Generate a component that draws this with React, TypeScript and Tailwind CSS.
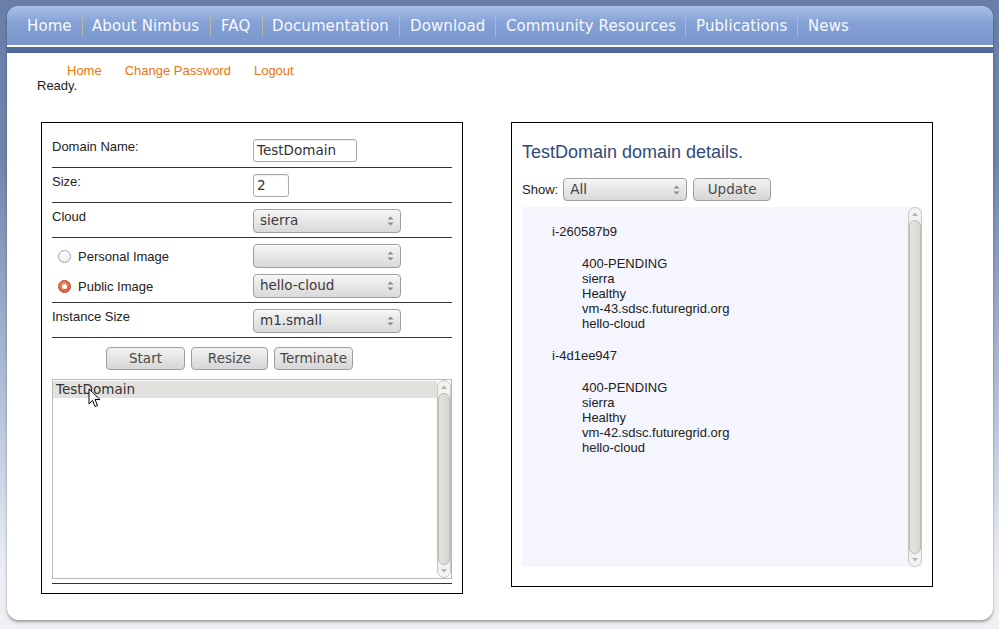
import React from "react";

const DV = "font-['DejaVu_Sans',sans-serif]";
const LIB = "font-['Liberation_Sans',Arial,sans-serif]";

function Arrows() {
  return (
    <svg width="7" height="12" viewBox="0 0 7 12" className="shrink-0">
      <path d="M0.5 4.5 L3.5 1.5 L6.5 4.5 Z" fill="#8a8a8a" />
      <path d="M0.5 7.5 L3.5 10.5 L6.5 7.5 Z" fill="#8a8a8a" />
    </svg>
  );
}

function Select({ value, w = "w-[148px]", h = "h-[24px]" }: { value: string; w?: string; h?: string }) {
  return (
    <div
      className={`${w} ${h} ${DV} flex items-center justify-between rounded-[4px] border border-[#9e9e9e] bg-[linear-gradient(to_bottom,#f5f5f5,#d9d9d9)] pl-[6px] pr-[6px] text-[13.5px] leading-none text-[#3a3a3a] shadow-[inset_0_1px_0_rgba(255,255,255,0.8)]`}
    >
      <span>{value}</span>
      <Arrows />
    </div>
  );
}

function Button({ label, w }: { label: string; w: string }) {
  return (
    <div
      className={`${w} ${DV} flex h-[23px] items-center justify-center rounded-[4px] border border-[#9e9e9e] bg-[linear-gradient(to_bottom,#f2f2f2,#d6d6d6)] text-[13.5px] leading-none text-[#4a4a4a]`}
    >
      {label}
    </div>
  );
}

function TextInput({ value, w }: { value: string; w: string }) {
  return (
    <div
      className={`${w} ${DV} flex h-[23px] items-center rounded-[3px] border border-[#a9a9a9] bg-white pl-[3px] text-[13.5px] leading-none text-[#333] shadow-[inset_0_1px_1px_rgba(0,0,0,0.08)]`}
    >
      {value}
    </div>
  );
}

function Scrollbar() {
  return (
    <div className="flex h-full w-[14px] shrink-0 flex-col items-center rounded-[7px] border border-[#c9c6bf] bg-[#f3f2f0]">
      <div className="flex h-[12px] w-full items-center justify-center">
        <svg width="6" height="4" viewBox="0 0 6 4">
          <path d="M0 4 L3 0.5 L6 4 Z" fill="#b5b2ab" />
        </svg>
      </div>
      <div className="w-[12px] flex-1 rounded-full border border-[#bdbab3] bg-[linear-gradient(to_right,#e6e4e1,#d9d7d3)]" />
      <div className="flex h-[12px] w-full items-center justify-center">
        <svg width="6" height="4" viewBox="0 0 6 4">
          <path d="M0 0 L3 3.5 L6 0 Z" fill="#b5b2ab" />
        </svg>
      </div>
    </div>
  );
}

function Radio({ checked }: { checked?: boolean }) {
  if (checked) {
    return (
      <div className="flex h-[13px] w-[13px] items-center justify-center rounded-full border border-[#b4472a] bg-[radial-gradient(circle_at_40%_35%,#f28a65,#e0522c)]">
        <div className="h-[5px] w-[5px] rounded-full bg-white" />
      </div>
    );
  }
  return (
    <div className="h-[13px] w-[13px] rounded-full border border-[#a0a0a0] bg-[linear-gradient(to_bottom,#ffffff,#ececec)]" />
  );
}

const navItems: { label: string; w: string; pl: string }[] = [
  { label: "Home", w: "w-[65px]", pl: "pl-[10px]" },
  { label: "About Nimbus", w: "w-[127px]", pl: "pl-[9px]" },
  { label: "FAQ", w: "w-[51px]", pl: "pl-[10px]" },
  { label: "Documentation", w: "w-[136px]", pl: "pl-[9px]" },
  { label: "Download", w: "w-[95px]", pl: "pl-[10px]" },
  { label: "Community Resources", w: "w-[189px]", pl: "pl-[10px]" },
  { label: "Publications", w: "w-[111px]", pl: "pl-[10px]" },
  { label: "News", w: "w-[60px]", pl: "pl-[10px]" },
];

const instances = [
  {
    id: "i-260587b9",
    lines: ["400-PENDING", "sierra", "Healthy", "vm-43.sdsc.futuregrid.org", "hello-cloud"],
  },
  {
    id: "i-4d1ee947",
    lines: ["400-PENDING", "sierra", "Healthy", "vm-42.sdsc.futuregrid.org", "hello-cloud"],
  },
];

export default function App() {
  return (
    <div
      className={`h-[629px] w-[999px] overflow-hidden bg-[linear-gradient(to_bottom,#6a7fa8_0px,#7084ad_160px,#b9c6de_420px,#e9edf3_560px,#eef0f4_629px)] pl-[7px] pt-[6px] ${LIB}`}
    >
      <div className="flex h-[614px] w-[986px] flex-col overflow-hidden rounded-[12px] bg-white shadow-[0_2px_3px_rgba(0,0,0,0.35)]">
        {/* Nav */}
        <div className="flex h-[39px] items-center bg-[linear-gradient(to_bottom,#a9c0eb_0%,#86a2d5_40%,#7997cc_100%)] pl-[10px]">
          {navItems.map((item, i) => (
            <React.Fragment key={item.label}>
              {i > 0 && <div className="h-[21px] w-px shrink-0 bg-[#bdb7a9]" />}
              <span
                className={`${DV} ${item.w} ${item.pl} shrink-0 whitespace-nowrap text-[15px] leading-[18px] tracking-[0.1px] text-[#f6f9ff]`}
              >
                {item.label}
              </span>
            </React.Fragment>
          ))}
        </div>
        <div className="h-[2px] bg-white" />
        <div className="h-[6px] bg-[#506a9a]" />

        {/* Sub nav */}
        <div className="mt-[10px] flex gap-[23px] pl-[60px] text-[13px] leading-[15px] text-[#ec750e]">
          <span>Home</span>
          <span>Change Password</span>
          <span>Logout</span>
        </div>
        <div className="pl-[30px] text-[13px] leading-[15px] text-[#1e1e1e]">Ready.</div>

        {/* Panels */}
        <div className="mt-[29px] flex items-start gap-[48px] pl-[34px]">
          {/* Left panel */}
          <div className="flex h-[472px] w-[422px] flex-col border border-black px-[10px]">
            <div className="flex items-start border-b border-[#333] pb-[5px] pt-[16px]">
              <div className="w-[201px] text-[13px] leading-[15px] text-[#222]">Domain Name:</div>
              <TextInput value="TestDomain" w="w-[104px]" />
            </div>
            <div className="flex items-start border-b border-[#333] pb-[5px] pt-[6px]">
              <div className="w-[201px] text-[13px] leading-[15px] text-[#222]">Size:</div>
              <TextInput value="2" w="w-[36px]" />
            </div>
            <div className="flex items-start border-b border-[#333] pb-[4px] pt-[6px]">
              <div className="w-[201px] text-[13px] leading-[15px] text-[#222]">Cloud</div>
              <Select value="sierra" />
            </div>
            <div className="flex flex-col gap-[6px] border-b border-[#333] pb-[4px] pt-[6px]">
              <div className="flex items-center">
                <div className="flex w-[201px] items-center">
                  <div className="ml-[6px] mr-[7px]">
                    <Radio />
                  </div>
                  <span className="text-[13px] leading-[15px] text-[#222]">Personal Image</span>
                </div>
                <Select value="" />
              </div>
              <div className="flex items-center">
                <div className="flex w-[201px] items-center">
                  <div className="ml-[6px] mr-[7px]">
                    <Radio checked />
                  </div>
                  <span className="text-[13px] leading-[15px] text-[#222]">Public Image</span>
                </div>
                <Select value="hello-cloud" />
              </div>
            </div>
            <div className="flex items-start border-b border-[#333] pb-[4px] pt-[6px]">
              <div className="w-[201px] text-[13px] leading-[15px] text-[#222]">Instance Size</div>
              <Select value="m1.small" />
            </div>
            <div className="flex gap-[6px] pl-[54px] pt-[9px]">
              <Button label="Start" w="w-[79px]" />
              <Button label="Resize" w="w-[77px]" />
              <Button label="Terminate" w="w-[79px]" />
            </div>
            <div className="relative mt-[9px] flex h-[200px] w-[400px] border border-[#bdbab3] bg-white">
              <div className="flex-1 pt-[1px]">
                <div className={`${DV} flex h-[17px] items-center bg-[#e3e1de] pl-[3px] text-[13.5px] leading-none text-[#333]`}>
                  TestDomain
                </div>
              </div>
              <Scrollbar />
              <svg
                className="absolute left-[35px] top-[8px]"
                width="13"
                height="20"
                viewBox="0 0 13 20"
              >
                <path
                  d="M1 1 L1 16 L4.5 12.5 L7 18.5 L9.5 17.5 L7 11.5 L12 11.5 Z"
                  fill="#fff"
                  stroke="#000"
                  strokeWidth="1"
                  strokeLinejoin="round"
                />
              </svg>
            </div>
            <div className="mt-[4px] h-px bg-[#333]" />
          </div>

          {/* Right panel */}
          <div className="flex h-[465px] w-[422px] flex-col border border-black px-[10px]">
            <div className="pt-[18px] text-[18px] leading-[22px] text-[#2f4b7b]">TestDomain domain details.</div>
            <div className="mt-[15px] flex items-center">
              <span className="mr-[5px] text-[13px] leading-[15px] text-[#222]">Show:</span>
              <Select value="All" w="w-[124px]" h="h-[23px]" />
              <div className="ml-[6px]">
                <Button label="Update" w="w-[78px]" />
              </div>
            </div>
            <div className="mt-[6px] flex h-[360px] w-[400px] bg-[#f4f5fd]">
              <div className="flex-1 pl-[30px] pt-[17px] text-[13px] leading-[15px] text-[#222]">
                {instances.map((inst, i) => (
                  <div key={inst.id} className={i > 0 ? "mt-[17px]" : ""}>
                    <div>{inst.id}</div>
                    <div className="mt-[17px] pl-[30px]">
                      {inst.lines.map((l) => (
                        <div key={l}>{l}</div>
                      ))}
                    </div>
                  </div>
                ))}
              </div>
              <Scrollbar />
            </div>
          </div>
        </div>
      </div>
    </div>
  );
}
